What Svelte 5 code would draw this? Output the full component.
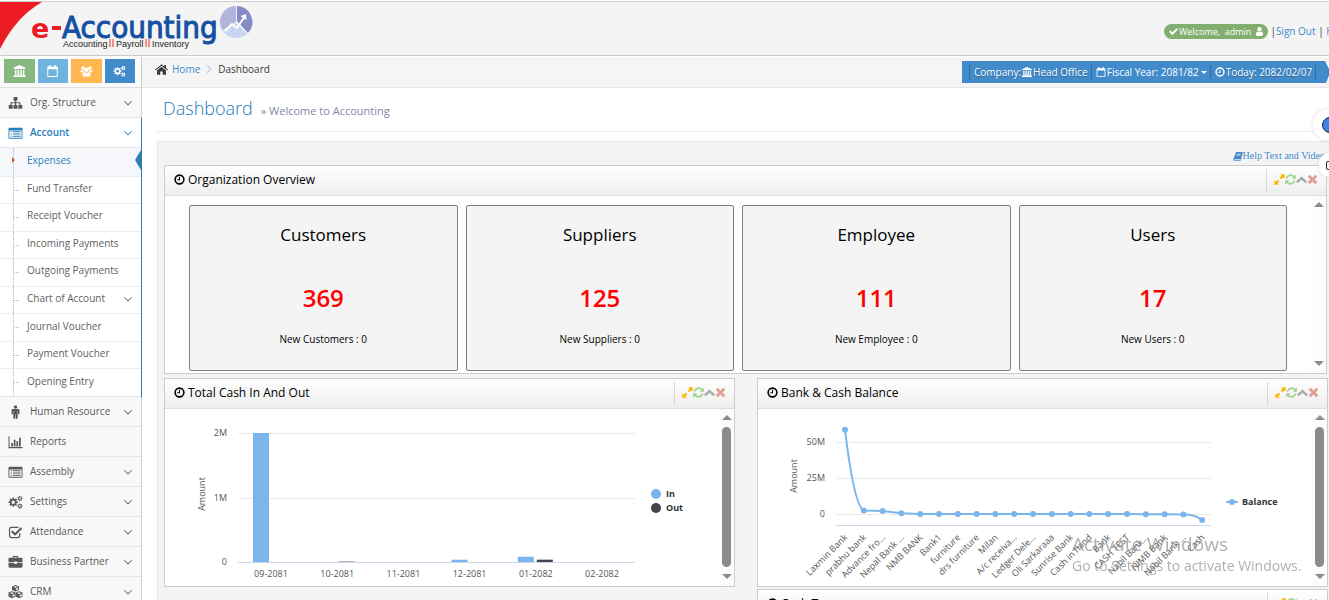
<script lang="ts">
	type MenuItem = { label: string; icon: string; arrow?: boolean; open?: boolean };

	const submenu = [
		'Expenses',
		'Fund Transfer',
		'Receipt Voucher',
		'Incoming Payments',
		'Outgoing Payments',
		'Chart of Account',
		'Journal Voucher',
		'Payment Voucher',
		'Opening Entry'
	];

	const menu: MenuItem[] = [
		{ label: 'Org. Structure', icon: 'sitemap', arrow: true },
		{ label: 'Account', icon: 'list', arrow: true, open: true },
		{ label: 'Human Resource', icon: 'male', arrow: true },
		{ label: 'Reports', icon: 'chart' },
		{ label: 'Assembly', icon: 'list', arrow: true },
		{ label: 'Settings', icon: 'cogs', arrow: true },
		{ label: 'Attendance', icon: 'tick', arrow: true },
		{ label: 'Business Partner', icon: 'briefcase', arrow: true },
		{ label: 'CRM', icon: 'cubes', arrow: true }
	];

	const shortcuts = [
		{ icon: 'bank', name: 'Company', kind: 'green' },
		{ icon: 'calendar', name: 'Calendar', kind: 'sky' },
		{ icon: 'group', name: 'Users', kind: 'orange' },
		{ icon: 'cogs', name: 'Settings', kind: 'blue' }
	];

	const cards = [
		{ title: 'Customers', total: 369, fresh: 0 },
		{ title: 'Suppliers', total: 125, fresh: 0 },
		{ title: 'Employee', total: 111, fresh: 0 },
		{ title: 'Users', total: 17, fresh: 0 }
	];

	// values in thousands
	const months = [
		{ label: '09-2081', cashIn: 2000, cashOut: 0 },
		{ label: '10-2081', cashIn: 0, cashOut: 6 },
		{ label: '11-2081', cashIn: 0, cashOut: 0 },
		{ label: '12-2081', cashIn: 35, cashOut: 0 },
		{ label: '01-2082', cashIn: 82, cashOut: 36 },
		{ label: '02-2082', cashIn: 0, cashOut: 0 }
	];

	// values in millions
	const balances: [string, number][] = [
		['Laxmin Bank', 58.5],
		['prabhu bank', 2.4],
		['Advance fro…', 2],
		['Nepal Bank …', 0.5],
		['NMB BANK', 0],
		['Bank1', 0],
		['furniture', 0],
		['drs furniture', 0],
		['Milan', 0],
		['A/c receiva…', 0],
		['Ledger Dele…', 0],
		['Oli Sarkaraaa', 0],
		['Sunrise Bank', 0],
		['Cash in hand', 0],
		['Bank', 0],
		['CASH TEST', 0],
		['Nabil Bank…', -0.1],
		['NIMB Bank', -0.1],
		['Nabil Bank …', -0.3],
		['Cash', -4.2]
	];

	const monthX = (i: number) => 106 + i * 66.2;
	const barH = (v: number) => (v * 129) / 2000;
	const points = balances.map(([label, v], i) => ({ label, x: 87 + i * 18.8, y: 105 - v * 1.44 }));

	const last = points.length - 1;
	let curve = `M${points[0].x} ${points[0].y}C${points[0].x + 4} ${points[0].y + 33} ${points[1].x - 8} ${points[1].y - 4} ${points[1].x} ${points[1].y}`;
	for (let i = 2; i < last; i++) curve += `L${points[i].x} ${points[i].y}`;
	curve += `C${points[last].x - 10} ${points[last - 1].y} ${points[last].x - 6} ${points[last].y - 4} ${points[last].x} ${points[last].y}`;

	function gear(cx: number, cy: number, r: number, teeth: number) {
		let d = '';
		const step = (Math.PI * 2) / teeth;
		for (let i = 0; i < teeth; i++) {
			const a = i * step;
			[[-0.3, 0.74], [-0.2, 1], [0.2, 1], [0.3, 0.74]].forEach(([off, k]) => {
				const x = cx + Math.cos(a + off * step) * r * k;
				const y = cy + Math.sin(a + off * step) * r * k;
				d += `${d ? 'L' : 'M'}${x.toFixed(2)} ${y.toFixed(2)}`;
			});
		}
		const h = r * 0.36;
		return `${d}ZM${cx - h} ${cy}a${h} ${h} 0 1 0 ${h * 2} 0a${h} ${h} 0 1 0 ${-h * 2} 0Z`;
	}

	const icons: Record<string, string> = {
		sitemap: 'M5.800 1h4.400v4.300H8.700v1.800h5v3.300H15.800v4.300h-4.600v-4.300h1.200V8.300H8.700v2.100h1.600v4.300H5.700v-4.300h1.600V8.300H3.600v2.100h1.200v4.300H.2v-4.300h2.100V7.100h5V5.300H5.800z',
		list: 'M1 2h14a1 1 0 0 1 1 1v10.500a1 1 0 0 1-1 1H1a1 1 0 0 1-1-1V3a1 1 0 0 1 1-1zM1 5v8.500h14V5zM2.500 6h1.300v1.200H2.500zM5 6h8.800v1.200H5zM2.500 8.500h1.300v1.200H2.500zM5 8.500h8.800v1.200H5zM2.500 11h1.300v1.200H2.500zM5 11h8.800v1.200H5z',
		male: 'M8 .2a2 2 0 1 1 0 4a2 2 0 1 1 0-4zM5 4.700h6a1.500 1.500 0 0 1 1.500 1.500v4.300h-1.600V7h-.4v8.800H8.300V11h-.6v4.800H5.500V7h-.4v3.500H3.500V6.200A1.500 1.500 0 0 1 5 4.700z',
		chart: 'M0 1.500h1.200v12.300H16V15H0zM3 9h2v4H3zM6 5.500h2V13H6zM9 7h2v6H9zM12 3h2v10h-2z',
		cogs: gear(5.4, 8.2, 5.4, 8) + gear(13, 4, 3, 7) + gear(13, 12.6, 3, 7),
		tick: 'M3 2h9l-1 1.400H3.500a1.600 1.600 0 0 0-1.600 1.600v7a1.600 1.600 0 0 0 1.600 1.600h7a1.600 1.600 0 0 0 1.600-1.600v-2l1.400-1.400V12a3 3 0 0 1-3 3H3.500a3 3 0 0 1-3-3V5A3 3 0 0 1 3 2zM4.500 6.300 7.500 9 14 2.500l1.700 1.700-8.200 8.200L2.900 8z',
		briefcase: 'M5 3V1.800A1 1 0 0 1 6 1h4a1 1 0 0 1 1 .8V3h3.800A1.200 1.200 0 0 1 16 4.200V8.300H9.500V7.500h-3v.8H0V4.200A1.200 1.200 0 0 1 1.200 3zM6.200 3h3.600v-.8H6.200zM0 9.200h6.500v1h3v-1H16v4A1.300 1.300 0 0 1 14.700 14.500H1.300A1.300 1.300 0 0 1 0 13.200z',
		cubes: 'M8 0l4 1.600v4L8 7.500 4 5.600v-4zM8 1.200 5.600 2.200 8 3.200l2.400-1zM8.600 6 11 4.900V3l-2.400 1zM3.900 7l4 1.700v4.500L3.900 15 0 13.200V8.700zM3.900 8.200 1.500 9.200l2.400 1 2.400-1zM4.500 13.500 7 12.300v-2L4.500 11.300zM12.100 7 16 8.700v4.500L12.100 15l-3.900-1.800V8.700zM12.100 8.200l-2.400 1 2.400 1 2.400-1zM12.700 13.500l2.400-1.200v-2l-2.400 1z',
		home: 'M8 1.500 11.500 4.400V2.500h2v3.600L16 8.200l-.9 1L8 3.300.9 9.200 0 8.200zM8 4.500l5.500 4.600v5.400H9.500v-4h-3v4h-4V9.100z',
		bank: 'M8 0l8 3.500v1.200h-1L14.500 5.300h-13L1 4.700H0V3.500zM2 6.200h2v6h1.500v-6h2v6H9v-6h2v6h1.500v-6h2v6l.7.8H1.200l.8-.8zM.7 13.600h14.600l.7 1V16H0v-1.400z',
		calendar: 'M3.500 0h2v2h5V0h2v2h1.300A1.200 1.200 0 0 1 15 3.200v11.500A1.200 1.200 0 0 1 13.800 16H2.200A1.200 1.200 0 0 1 1 14.700V3.200A1.200 1.200 0 0 1 2.200 2h1.300zM2.300 5.500v9.200h11.400V5.500z',
		group: 'M3.300 1.800a2.300 2.300 0 1 1 0 4.600a2.300 2.300 0 1 1 0-4.600zM12.700 1.800a2.300 2.300 0 1 1 0 4.600a2.300 2.300 0 1 1 0-4.600zM8 3.300a3 3 0 1 1 0 6a3 3 0 1 1 0-6zM0 7h4.300Q4.300 8.500 5 9.500L3.500 10H1.300Q0 10 0 8.700zM11.700 7H16v1.700Q16 10 14.700 10h-2.200l-1.500-.5q.8-1 .7-2.500zM5 9.700q3 1.500 6 0 2.500.5 2.500 3.300 0 2.200-2 2.200h-7q-2 0-2-2.200 0-2.800 2.500-3.300z',
		user: 'M8 0a4 4 0 1 1 0 8a4 4 0 1 1 0-8zM4.500 7.800q3.500 2.600 7 0 3 1 3 5.200 0 3-2.500 3H4q-2.500 0-2.500-3 0-4.200 3-5.200z',
		clock: 'M8 .5a7.500 7.500 0 1 1 0 15a7.500 7.500 0 1 1 0-15zM8 2.800a5.200 5.200 0 1 0 0 10.400a5.200 5.200 0 1 0 0-10.400zM7.300 4h1.500v5H4.800V7.500h2.500z',
		check: 'M0 8.500 2.500 6 6 9.500 13.500 2 16 4.500 6 14.500z',
		expand: 'M9 .5h6.500V7L13.300 4.900 10.500 7.700 8.300 5.500 11.100 2.700zM.5 9l2.200 2.100 2.800-2.800 2.200 2.200-2.800 2.800L7 15.500H.5z',
		refresh: 'M15.800.8v6H9.800l2.100-2.100A5 5 0 0 0 3.400 6.700H.8A7.500 7.500 0 0 1 13.700 2.900zM.2 15.200v-6h6l-2.100 2.100a5 5 0 0 0 8.500-2h2.600A7.500 7.500 0 0 1 2.300 13.100z',
		up: 'M8 3.500l8 7.500-2.300 2.600L8 8.200l-5.700 5.400L0 11z',
		down: 'M8 11.800 1.500 5.500l.9-.9L8 9.900l5.600-5.300.9.900z',
		times: 'M4 1 8 5l4-4 3 3-4 4 4 4-3 3-4-4-4 4-3-3 4-4-4-4z',
		book: 'M5 1.500h9.500q1.500.3 1 2L13 12q-.5 1.300-1.700 1.300H3q-1 0-.8.700.3.500 1 .5H12l2.800-9.700q.7.400.5 1.200L13 14q-.5 1.500-1.700 1.500H3Q.5 15.500.5 13zM6 4.500 5.700 5.500h6.500l.3-1zM5.300 7 5 8h6.500l.3-1z'
	};
</script>

{#snippet icon(name: string)}
	<svg class="icon" viewBox="0 0 16 16" aria-hidden="true">
		<path d={icons[name]} fill="currentColor" fill-rule="evenodd" />
	</svg>
{/snippet}

{#snippet widgetHead(title: string)}
	<header class="widget-head">
		<h2>{@render icon('clock')}{title}</h2>
		<div class="actions">
			<button class="expand" aria-label="Fullscreen">{@render icon('expand')}</button>
			<button class="reload" aria-label="Reload">{@render icon('refresh')}</button>
			<button class="fold" aria-label="Collapse">{@render icon('up')}</button>
			<button class="close" aria-label="Close">{@render icon('times')}</button>
		</div>
	</header>
{/snippet}

{#snippet scrollbar(thumb: boolean)}
	<div class="scrollbar" aria-hidden="true">
		<i class="tri up"></i>
		<span class:thumb></span>
		<i class="tri down"></i>
	</div>
{/snippet}

<div class="app">
	<header class="navbar">
		<svg class="logo" viewBox="0 0 260 52" role="img" aria-label="e-Accounting">
			<path d="M0 0H42Q16 15 0 47Z" fill="#ed1c24" />
			<text class="brand-e" x="31" y="36">e</text>
			<rect x="52" y="24" width="9" height="4" fill="#ed1c24" />
			<text class="brand" x="62" y="36">Accounting</text>
			<text class="tagline" x="63" y="45">Accounting</text>
			<text class="tagline" x="116" y="45">Payroll</text>
			<text class="tagline" x="152" y="45">Inventory</text>
			<path d="M110 37v8M113 37v8M146 37v8M149 37v8" stroke="#f4907f" stroke-width="2" />
			<path d="M236 20V4a16 16 0 0 0-13.600 24.500z" fill="#b1b4dc" />
			<path d="M237 19V4a16 16 0 0 1 11 27z" fill="#868bc5" />
			<path d="M236 21l11 11a16 16 0 0 1-24-3z" fill="#c8d4f0" />
			<path d="M225 29l7-7 5 4 8-12" fill="none" stroke="#fff" stroke-width="2" />
			<path d="M240.500 14l5.500-2 .5 6z" fill="#fff" />
		</svg>
		<nav class="user-nav">
			<span class="welcome">{@render icon('check')}Welcome,&nbsp; admin {@render icon('user')}</span>
			<span>|<a href="#signout">Sign Out</a> | <a href="#help">Help</a></span>
		</nav>
	</header>

	<div class="main">
		<aside class="sidebar">
			<div class="shortcuts">
				{#each shortcuts as s}
					<button class={s.kind} aria-label={s.name}>{@render icon(s.icon)}</button>
				{/each}
			</div>
			<ul class="menu">
				{#each menu as item}
					<li class:open={item.open}>
						<a class="top" href="#{item.label}">
							{@render icon(item.icon)}
							<span>{item.label}</span>
							{#if item.arrow}<b>{@render icon('down')}</b>{/if}
						</a>
						{#if item.open}
							<ul class="submenu">
								{#each submenu as label, i}
									<li class:active={i === 0}>
										<a href="#{label}">
											<span>{label}</span>
											{#if label === 'Chart of Account'}<b>{@render icon('down')}</b>{/if}
										</a>
									</li>
								{/each}
							</ul>
						{/if}
					</li>
				{/each}
			</ul>
		</aside>

		<main class="content">
			<div class="breadcrumbs">
				<nav class="crumbs">
					{@render icon('home')}
					<a href="#home">Home</a>
					<span class="sep">{@render icon('down')}</span>
					<span>Dashboard</span>
				</nav>
				<div class="ribbon">
					<span>Company: {@render icon('bank')} Head Office</span>
					<button>{@render icon('calendar')} Fiscal Year: 2081/82 <i class="caret"></i></button>
					<span>{@render icon('clock')} Today: 2082/02/07</span>
				</div>
			</div>

			<div class="page-header">
				<h1>Dashboard</h1>
				<small>» Welcome to Accounting</small>
			</div>

			<div class="board">
				<a class="help" href="#videos">{@render icon('book')}Help Text and Video</a>

				<section class="widget">
					{@render widgetHead('Organization Overview')}
					<div class="widget-body">
						<div class="cards">
							{#each cards as card}
								<div class="card">
									<h3>{card.title}</h3>
									<strong>{card.total}</strong>
									<p>New {card.title} : {card.fresh}</p>
								</div>
							{/each}
						</div>
						{@render scrollbar(false)}
					</div>
				</section>

				<div class="columns">
					<section class="widget">
						{@render widgetHead('Total Cash In And Out')}
						<div class="widget-body">
							<svg class="chart" viewBox="0 0 554 177" role="img" aria-label="Total cash in and out">
								<path d="M73 24.500H470M73 89.500H470" stroke="#ebebeb" />
								<text class="tick end" x="62" y="27">2M</text>
								<text class="tick end" x="62" y="92">1M</text>
								<text class="tick end" x="62" y="156">0</text>
								<text class="title" transform="translate(40 85) rotate(-90)">Amount</text>
								{#each months as m, i}
									<rect x={monthX(i) - 18} y={153 - barH(m.cashIn)} width="16" height={barH(m.cashIn)} fill="#7cb5ec" />
									<rect x={monthX(i) + 1} y={153 - barH(m.cashOut)} width="16" height={barH(m.cashOut)} fill="#434348" />
									<text class="tick mid" x={monthX(i)} y="168">{m.label}</text>
								{/each}
								<path d="M73 153.500H470" stroke="#ccd6eb" />
								<circle cx="491" cy="85" r="5" fill="#7cb5ec" />
								<text class="legend" x="501" y="88">In</text>
								<circle cx="491" cy="99" r="5" fill="#434348" />
								<text class="legend" x="501" y="102">Out</text>
							</svg>
							{@render scrollbar(true)}
						</div>
					</section>

					<div class="stack">
						<section class="widget">
							{@render widgetHead('Bank & Cash Balance')}
							<div class="widget-body">
								<svg class="chart" viewBox="0 0 554 177" role="img" aria-label="Bank and cash balance">
									<path d="M78 33.500H453M78 69.500H453M78 105.500H453" stroke="#ebebeb" />
									<path d="M78 116.500H453" stroke="#ccd6eb" />
									<text class="tick end" x="67" y="36">50M</text>
									<text class="tick end" x="67" y="72">25M</text>
									<text class="tick end" x="67" y="108">0</text>
									<text class="title" transform="translate(39 67) rotate(-90)">Amount</text>
									<path d={curve} fill="none" stroke="#7cb5ec" stroke-width="2" />
									{#each points as p}
										<circle cx={p.x} cy={p.y} r="3" fill="#7cb5ec" />
										<text class="tick end" transform="translate({p.x + 3} 129) rotate(-45)">{p.label}</text>
									{/each}
									<path d="M468 93H480" stroke="#7cb5ec" stroke-width="2" />
									<circle cx="474" cy="93" r="3" fill="#7cb5ec" />
									<text class="legend" x="484" y="96">Balance</text>
								</svg>
								{@render scrollbar(true)}
							</div>
						</section>
						<section class="widget">
							{@render widgetHead('Cash Type')}
						</section>
					</div>
				</div>
			</div>
		</main>
	</div>

	<div class="floating">
		<button class="assist" aria-label="Assistant"><i></i></button>
		<button class="panel" aria-label="Side panel"><i></i></button>
	</div>

	<div class="watermark">
		<p>Activate Windows</p>
		<small>Go to Settings to activate Windows.</small>
	</div>
</div>

<style>
	:global(body) {
		margin: 0;
		background: #fff;
	}

	.app {
		height: 100vh;
		overflow: hidden;
		display: flex;
		flex-direction: column;
		font-family: 'Open Sans', sans-serif;
		font-size: 10px;
		color: #393939;
	}

	h1, h2, h3, p, ul {
		margin: 0;
		padding: 0;
		font-weight: 400;
	}

	ul {
		list-style: none;
	}

	a {
		color: #428bca;
		text-decoration: none;
	}

	button {
		font: inherit;
		color: inherit;
		border: 0;
		padding: 0;
		background: none;
		cursor: pointer;
	}

	.icon {
		width: 10px;
		height: 10px;
		flex: none;
	}

	/* top bar */
	.navbar {
		flex: none;
		display: flex;
		justify-content: space-between;
		height: 53px;
		margin-top: 1px;
		border-top: 1px solid #ccc;
		border-bottom: 1px solid #ccc;
		background: #f4f4f4;
	}

	.logo {
		width: 260px;
		height: 52px;
	}

	.brand-e {
		font: bold 27px 'DejaVu Sans', sans-serif;
		fill: #ed1c24;
	}

	.brand {
		font: 31px 'DejaVu Sans Condensed', 'DejaVu Sans', sans-serif;
		fill: #1450a3;
		stroke: #1450a3;
		stroke-width: 1px;
	}

	.tagline {
		font: 9px 'Liberation Sans', sans-serif;
		fill: #222;
	}

	.user-nav {
		display: flex;
		align-items: center;
		gap: 2px;
		width: 165px;
		padding-top: 5px;
		box-sizing: border-box;
		white-space: nowrap;
		overflow: hidden;
	}

	.welcome {
		display: flex;
		align-items: center;
		gap: 1px;
		height: 15px;
		padding: 0 4px 0 5px;
		border-radius: 8px;
		font-size: 9px;
		color: #fff;
		background: #82af6f;
	}

	.welcome .icon {
		width: 9px;
		height: 9px;
	}

	.welcome .icon:last-child {
		margin-left: 3px;
	}

	.main {
		flex: 1;
		min-height: 0;
		display: flex;
		padding-top: 1px;
	}

	/* sidebar */
	.sidebar {
		flex: none;
		width: 141px;
		border-right: 1px solid #ccc;
		background: #f8f8f8;
	}

	.shortcuts {
		display: flex;
		gap: 3px;
		padding: 2px 6px 4px 4px;
		border-bottom: 1px solid #ddd;
		background: #fafafa;
	}

	.shortcuts button {
		flex: 1;
		height: 24px;
		display: grid;
		place-items: center;
		color: #fff;
	}

	.shortcuts .icon {
		width: 13px;
		height: 12px;
	}

	.green { background: #87b87f; }
	.sky { background: #6fb3e0; }
	.orange { background: #ffb752; }
	.blue { background: #428bca; }

	.top {
		display: flex;
		align-items: center;
		gap: 7px;
		height: 29px;
		padding: 0 8px;
		border-bottom: 1px solid #e5e5e5;
		color: #585858;
	}

	.top .icon {
		width: 15px;
		height: 14px;
	}

	.top span,
	.submenu span {
		flex: 1;
		padding-bottom: 2px;
	}

	.top b,
	.submenu b {
		display: flex;
	}

	.menu b .icon {
		width: 10px;
		height: 10px;
	}

	.open {
		background: #fff;
		margin-right: -1px;
		border-right: 1px solid #2b7dbc;
	}

	.open .top {
		color: #2b7dbc;
		font-weight: 600;
	}

	.submenu {
		display: grid;
		grid-auto-rows: 1fr;
		height: 248px;
		border-bottom: 1px solid #e5e5e5;
	}

	.submenu li {
		position: relative;
		display: flex;
		border-top: 1px dotted #ddd;
	}

	.submenu li:first-child {
		border-top: 0;
	}

	.submenu li::before {
		content: '';
		position: absolute;
		inset: 0 auto 0 13px;
		border-left: 1px dotted #9dbdd6;
	}

	.submenu li::after {
		content: '';
		position: absolute;
		left: 14px;
		top: 13px;
		width: 5px;
		border-top: 1px dotted #9dbdd6;
	}

	.submenu a {
		flex: 1;
		display: flex;
		align-items: center;
		padding: 0 8px 2px 27px;
		color: #616161;
	}

	.submenu .active {
		background: #f5f7fa;
	}

	.submenu .active a {
		color: #2b7dbc;
	}

	.submenu .active::after {
		left: 12px;
		top: 9px;
		width: 0;
		border: 3px solid transparent;
		border-left-color: #c86139;
		border-right: 0;
	}

	.submenu .active a::after {
		content: '';
		position: absolute;
		right: 0;
		top: 2px;
		border: 10px solid transparent;
		border-right: 6px solid #2b7dbc;
		border-left: 0;
	}

	/* breadcrumbs */
	.content {
		flex: 1;
		min-width: 0;
		display: flex;
		flex-direction: column;
	}

	.breadcrumbs {
		flex: none;
		display: flex;
		align-items: center;
		justify-content: space-between;
		height: 30px;
		border-bottom: 1px solid #e5e5e5;
		background: #f5f5f5;
	}

	.crumbs {
		display: flex;
		align-items: center;
		gap: 4px;
		padding: 0 0 6px 13px;
	}

	.crumbs > .icon {
		width: 13px;
		height: 13px;
	}

	.sep {
		display: flex;
		color: #b2b6bf;
		transform: rotate(-90deg);
	}

	.ribbon {
		display: flex;
		align-items: center;
		box-sizing: border-box;
		width: 367px;
		height: 22px;
		padding-left: 7px;
		color: #fff;
		background: #428bca;
		text-shadow: 0 1px 1px #2b5f8e;
		white-space: nowrap;
		clip-path: polygon(0 0, calc(100% - 4px) 0, 100% 35%, 100% 65%, calc(100% - 3px) 100%, 0 100%);
	}

	.ribbon span,
	.ribbon button {
		display: flex;
		align-items: center;
		gap: 1px;
		height: 15px;
		padding: 0 3px 0 4px;
		border-left: 1px solid #2f6fa8;
	}

	.ribbon span:last-child {
		border-right: 1px solid #2f6fa8;
	}

	.caret {
		margin-left: 1px;
		border: 3px solid transparent;
		border-top-color: #fff;
		border-bottom: 0;
	}

	.page-header {
		flex: none;
		display: flex;
		align-items: baseline;
		gap: 8px;
		height: 36px;
		margin-left: 15px;
		padding: 7px 0 0 6px;
		border-bottom: 1px dotted #ddd;
	}

	h1 {
		font-size: 18px;
		line-height: 26px;
		font-weight: 300;
		color: #2679b5;
	}

	.page-header small {
		font-size: 11px;
		color: #8089a0;
	}

	/* dashboard */
	.board {
		flex: 1;
		min-height: 0;
		display: flex;
		flex-direction: column;
		gap: 4px;
		margin: 9px 0 0 15px;
		padding: 8px 2px 0 6px;
		border: 1px solid #e5e5e5;
		border-width: 1px 0 0 1px;
		background: #f4f4f4;
	}

	.help {
		display: flex;
		align-items: center;
		align-self: flex-end;
		height: 12px;
		padding-right: 2px;
		font: 10px 'Liberation Serif', serif;
	}

	.widget {
		border: 1px solid #ccc;
		background: #fff;
	}

	.widget-head {
		display: flex;
		align-items: center;
		justify-content: space-between;
		height: 29px;
		border-bottom: 1px solid #ddd;
		background: linear-gradient(#fff, #eee);
	}

	h2 {
		display: flex;
		align-items: center;
		gap: 3px;
		padding: 0 0 2px 9px;
		font-size: 12px;
		color: #000;
	}

	h2 .icon {
		width: 11px;
		height: 11px;
	}

	.actions {
		display: flex;
		align-items: center;
		height: 21px;
		padding: 0 8px 2px 7px;
		border-left: 1px solid #d9d9d9;
	}

	.actions button {
		display: flex;
	}

	.actions .icon {
		width: 11px;
		height: 11px;
	}

	.expand { color: #ffb400; }
	.reload { color: #a0d294; }
	.fold { color: #aaa; }
	.close { color: #e09e96; }

	.widget-body {
		display: flex;
		height: 177px;
	}

	.cards {
		flex: 1;
		display: grid;
		grid-template-columns: repeat(4, 1fr);
		gap: 8px;
		padding: 9px 24px 2px 24px;
	}

	.card {
		display: flex;
		flex-direction: column;
		align-items: center;
		padding-top: 16px;
		border: 1px solid #808080;
		border-radius: 2px;
		background: #f4f4f4;
		color: #000;
	}

	h3 {
		font-size: 17px;
		line-height: 26px;
	}

	.card strong {
		margin-top: 33px;
		font-size: 24px;
		line-height: 34px;
		font-weight: 600;
		color: #f00;
	}

	.card p {
		margin-top: 16px;
		line-height: 16px;
	}

	.scrollbar {
		flex: none;
		display: flex;
		flex-direction: column;
		align-items: center;
		gap: 7px;
		width: 15px;
		padding: 6px 0 7px;
		box-sizing: border-box;
		background: #fcfcfc;
	}

	.scrollbar span {
		flex: 1;
		width: 9px;
		border-radius: 5px;
	}

	.scrollbar .thumb {
		background: #8b8b8b;
	}

	.tri {
		border: 5px solid transparent;
	}

	.tri.up {
		border-top: 0;
		border-bottom-color: #8b8b8b;
	}

	.tri.down {
		border-bottom: 0;
		border-top-color: #8b8b8b;
	}

	.columns {
		display: grid;
		grid-template-columns: 1fr 1fr;
		gap: 22px;
		align-items: start;
	}

	.stack {
		display: grid;
		gap: 2px;
	}

	.chart {
		flex: 1;
		min-width: 0;
		height: 177px;
	}

	.tick,
	.title {
		font-size: 9px;
		fill: #555;
	}

	.title {
		text-anchor: middle;
	}

	.end {
		text-anchor: end;
	}

	.mid {
		text-anchor: middle;
	}

	.legend {
		font-size: 9px;
		font-weight: 700;
		fill: #333;
	}

	/* things that float over the page */
	.floating {
		position: fixed;
		right: 0;
		top: 110px;
		display: flex;
		flex-direction: column;
		align-items: flex-end;
		gap: 13px;
	}

	.floating button {
		display: flex;
		align-items: center;
		background: #fff;
		border-radius: 15px 0 0 15px;
		box-shadow: 0 0 5px #0002;
		overflow: hidden;
	}

	.floating .assist {
		width: 16px;
		height: 30px;
		padding-left: 9px;
	}

	.floating .panel {
		width: 10px;
		height: 24px;
		padding-left: 7px;
	}

	.assist i {
		flex: none;
		width: 16px;
		height: 16px;
		box-sizing: border-box;
		border: 1px solid #223;
		border-radius: 8px;
		background: #3b82e8;
	}

	.panel i {
		flex: none;
		width: 10px;
		height: 9px;
		box-sizing: border-box;
		border: 1px solid #222;
		border-radius: 2px;
	}

	.watermark {
		position: fixed;
		right: 20px;
		bottom: 24px;
		width: 237px;
		color: #888a;
		white-space: nowrap;
		pointer-events: none;
	}

	.watermark p {
		font-size: 19px;
		line-height: 24px;
	}

	.watermark small {
		display: block;
		font-size: 14px;
		line-height: 20px;
	}
</style>
